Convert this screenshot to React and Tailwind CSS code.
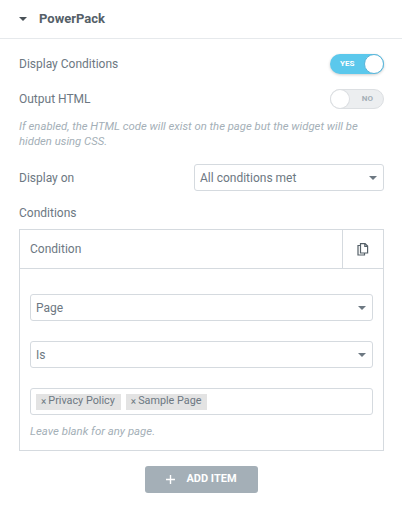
function Caret({ className }) {
  return (
    <svg width="8" height="4" viewBox="0 0 10 5" className={className}>
      <path d="M0 0h10L5 5z" fill="currentColor" />
    </svg>
  );
}

function SelectBox({ label, className }) {
  return (
    <div className={`flex h-[27px] items-center justify-between rounded-[3px] border border-[#d5dadf] bg-white pl-[5px] pr-[6px] text-[12px] text-[#6d7882] ${className}`}>
      <span>{label}</span>
      <Caret className="text-[#6d7882]" />
    </div>
  );
}

function Toggle({ on }) {
  if (on) {
    return (
      <div className="flex h-5 w-[54px] items-center justify-between rounded-full bg-[#5bc8ec] shadow-[0_1px_3px_rgba(0,0,0,0.2)]">
        <span className="pl-[10px] text-[8px] font-bold text-white">YES</span>
        <span className="h-5 w-5 rounded-full border border-[#5bb4d8] bg-white" />
      </div>
    );
  }
  return (
    <div className="flex h-5 w-[54px] items-center justify-between rounded-full border border-[#dcdfe2] bg-[#eceef0]">
      <span className="h-[18px] w-[18px] rounded-full bg-white shadow-[0_0_0_1px_#dcdfe2]" />
      <span className="pr-[10px] text-[8px] font-bold text-[#a4afb7]">NO</span>
    </div>
  );
}

function Tag({ label }) {
  return (
    <span className="flex h-4 items-center gap-[2px] bg-[#e3e3e3] pl-[5px] pr-[6px] text-[10.8px] text-[#6d7882]">
      <span className="text-[10px] leading-none">×</span>
      {label}
    </span>
  );
}

export default function App() {
  return (
    <div className="h-[508px] w-[402px] overflow-hidden bg-white font-['Roboto',sans-serif] text-[#6d7882]">
      <div className="flex h-[39px] items-center border-b border-[#e6e9ec] pl-[19px]">
        <Caret className="text-[#495157]" />
        <span className="ml-3 text-[13px] font-bold text-[#556068]">PowerPack</span>
      </div>

      <div className="pl-[19px] pr-[18px]">
        <div className="mt-[15px] flex h-5 items-center justify-between text-[12px]">
          <span>Display Conditions</span>
          <Toggle on />
        </div>
        <div className="mt-[15px] flex h-5 items-center justify-between text-[12px]">
          <span>Output HTML</span>
          <Toggle />
        </div>
        <p className="mt-[10px] text-[11.3px] italic leading-[15px] text-[#a4afb7]">
          If enabled, the HTML code will exist on the page but the widget will be hidden using CSS.
        </p>

        <div className="mt-[15px] flex items-center justify-between text-[12px]">
          <span>Display on</span>
          <SelectBox label="All conditions met" className="w-[190px]" />
        </div>

        <div className="mt-[15px] text-[12px] leading-[14px]">Conditions</div>

        <div className="mt-[9px] h-[222px] border border-[#d5dadf]">
          <div className="flex h-[39px] items-center border-b border-[#d5dadf]">
            <span className="flex-1 pl-[10px] text-[12px]">Condition</span>
            <div className="flex h-full w-[41px] items-center justify-center border-l border-[#d5dadf]">
              <svg width="12" height="13" viewBox="0 0 12 13" fill="none" stroke="#556068" strokeWidth="1.2">
                <path d="M3.5 2.5H1v9.5h6.5V10" />
                <path d="M3.5 .7h4.6L10.6 3v7H3.5z" />
                <path d="M7.8 .9v2.4h2.6" />
              </svg>
            </div>
          </div>
          <div className="px-[10px] pt-[25px]">
            <SelectBox label="Page" />
            <SelectBox label="Is" className="mt-5" />
            <div className="mt-5 flex h-[27px] items-center gap-[5px] rounded-[3px] border border-[#d5dadf] pl-[5px]">
              <Tag label="Privacy Policy" />
              <Tag label="Sample Page" />
            </div>
            <p className="mt-[9px] text-[11.4px] italic leading-[14px] text-[#a4afb7]">Leave blank for any page.</p>
          </div>
        </div>

        <div className="mt-[15px] flex justify-center">
          <div className="flex h-[27px] w-[113px] items-center justify-center gap-[11px] rounded-[3px] bg-[#a4afb7] text-[11px] font-bold text-white">
            <svg width="9" height="9" viewBox="0 0 9 9" stroke="white" strokeWidth="1.4">
              <path d="M4.5 0v9M0 4.5h9" />
            </svg>
            ADD ITEM
          </div>
        </div>
      </div>
    </div>
  );
}
